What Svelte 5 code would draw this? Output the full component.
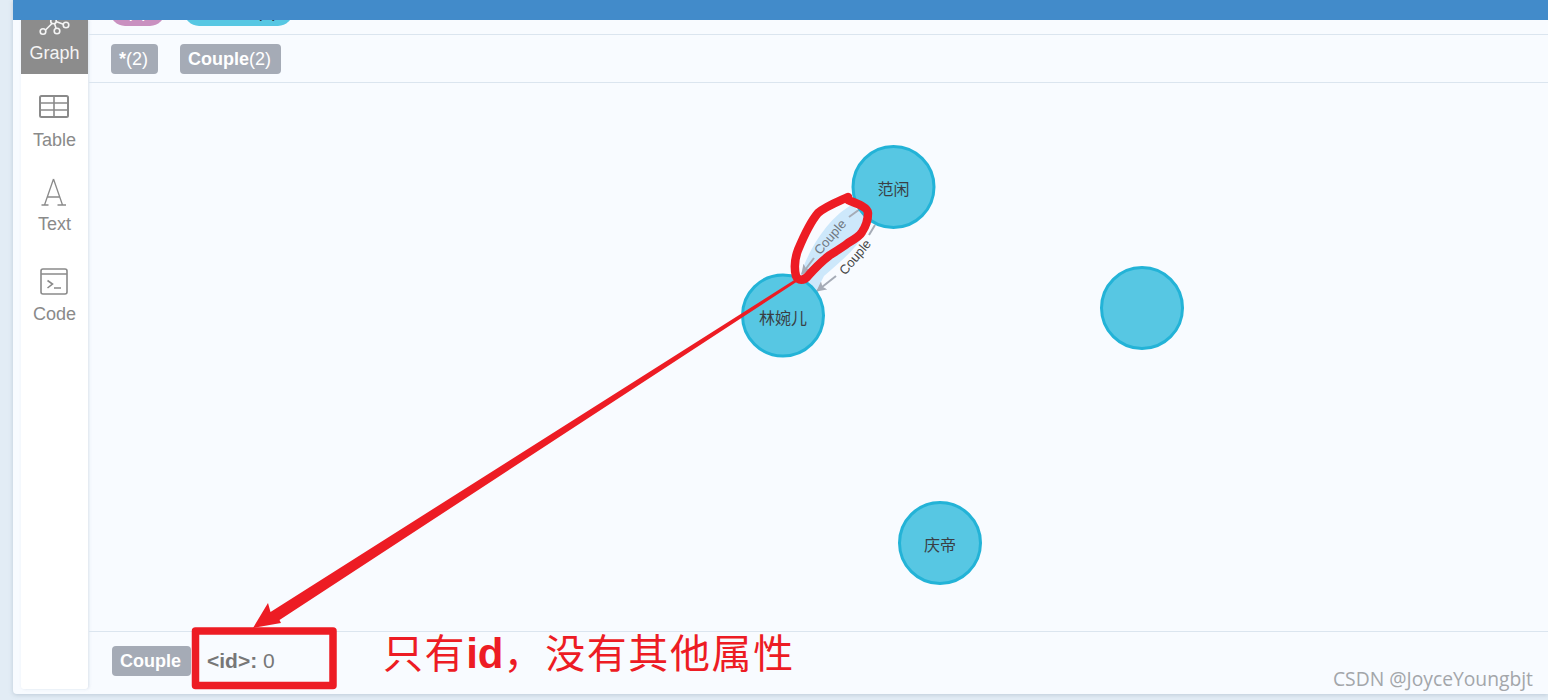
<script>
  const tabs = [
    { name: "Table", cls: "table" },
    { name: "Text", cls: "text" },
    { name: "Code", cls: "code" }
  ];

  const nodes = [
    { x: 893.5, y: 187, label: "范闲" },
    { x: 783, y: 315.5, label: "林婉儿" },
    { x: 1142, y: 308, label: "" },
    { x: 940, y: 543, label: "庆帝" }
  ];

  // red hand-drawn loop around the selected relationship
  const loop = "M848 197 C842 200 826 206 818 213 C812 220 803 238 798 250 C795 258 794 268 796 276 C798 281 804 281 808 276 C815 268 822 261 830 255 C838 250 843 247 848 243 C855 239 860 236 862 232 C866 226 868 220 868 213 C868 207 856 203 848 200";
</script>

<div class="page">
  <div class="frame">
    <div class="topbar"></div>
    <div class="body">
      <nav class="sidebar">
        <div class="tab active">
          <svg class="icon-graph" width="32" height="20" viewBox="0 0 32 20" fill="none" stroke="currentColor" stroke-width="1.6">
            <circle cx="4" cy="14.5" r="2.8" />
            <circle cx="18" cy="14" r="2.8" />
            <circle cx="27" cy="8" r="2.8" />
            <circle cx="14.500" cy="4" r="2.8" />
            <path d="M6.500 13 L13 6.500 M15.500 6.500 L17 11.300 M17 4.500 L24.300 7.300" />
          </svg>
          <span>Graph</span>
        </div>
        {#each tabs as tab}
          <div class="tab {tab.cls}">
            {#if tab.cls === "table"}
              <svg width="30" height="23" viewBox="0 0 30 23" fill="none" stroke="currentColor" stroke-width="2">
                <rect x="1" y="1" width="28" height="21" rx="1.500" />
                <path d="M1 8 H29 M1 15 H29 M15 1 V22" stroke-width="1.600" />
              </svg>
            {:else if tab.cls === "text"}
              <svg width="26" height="28" viewBox="0 0 26 28" fill="none" stroke="currentColor" stroke-width="1.300">
                <path d="M12.500 1 L3.500 27 M12.500 1 L21.500 27 M6.500 19 H18.500 M0.500 27 H7.500 M16.500 27 H25" />
              </svg>
            {:else}
              <svg width="28" height="27" viewBox="0 0 28 27" fill="none" stroke="currentColor" stroke-width="1.600">
                <rect x="1" y="1" width="26" height="25" rx="2" />
                <path d="M1 6 H27 M7.500 12.500 L12.500 16 L7.500 20 M14 20 H21" />
              </svg>
            {/if}
            <span>{tab.name}</span>
          </div>
        {/each}
      </nav>

      <main class="main">
        <div class="legend nodes-row">
          <span class="pill purple">*(4)</span>
          <span class="pill blue">Person(4)</span>
        </div>
        <div class="legend rels-row">
          <span class="badge"><b>*</b>(2)</span>
          <span class="badge"><b>Couple</b>(2)</span>
        </div>

        <svg class="canvas" viewBox="89 83 1459 548">
          <defs>
            <marker id="arrow" markerWidth="10" markerHeight="10" refX="9" refY="5" orient="auto" markerUnits="userSpaceOnUse">
              <path d="M0 0 L10 5 L0 10 L2 5 Z" fill="#a5abb6" />
            </marker>
          </defs>

          <path class="halo" d="M852 205 C835 213 812 240 800 276 L816 292 L824 276 C845 258 866 240 870 220 Z" />

          <path class="edge" d="M860 209 L849 217" />
          <path class="edge" d="M814 258 L802 274" marker-end="url(#arrow)" />
          <path class="edge" d="M875 225 L869 235" />
          <path class="edge" d="M836 276 L817 291" marker-end="url(#arrow)" />
          <text class="edge-label selected" transform="translate(830 237) rotate(-49)">Couple</text>
          <text class="edge-label" transform="translate(855 257) rotate(-50)">Couple</text>

          {#each nodes as node}
            <circle class="node" cx={node.x} cy={node.y} r="40.5" />
            {#if node.label}
              <text class="node-label" x={node.x} y={node.y + 1}>{node.label}</text>
            {/if}
          {/each}
        </svg>

        <footer class="details">
          <span class="badge solid">Couple</span>
          <span class="prop"><b>&lt;id&gt;:</b> 0</span>
        </footer>
      </main>
    </div>
  </div>

  <!-- annotation layer drawn on top of the screenshot -->
  <svg class="marks" viewBox="0 0 1548 700">
    <path d={loop} class="loop" />
    <polygon class="ink" points="799,277 801,279 279.500,620 281,623 253,628 268,603 270.500,612" />
    <rect class="box" x="195.500" y="631" width="137.500" height="54.500" />
  </svg>
  <div class="note">只有<b>id</b>，没有其他属性</div>
  <div class="watermark">CSDN @JoyceYoungbjt</div>
</div>

<style>
  :global(body) {
    margin: 0;
    background: #e2ecf5;
  }

  .page {
    position: relative;
    width: 1548px;
    height: 700px;
    overflow: hidden;
    background: #e2ecf5;
    font-family: "Liberation Sans", Arial, sans-serif;
  }

  .frame {
    display: flex;
    flex-direction: column;
    height: 694px;
    margin-left: 13px;
    background: #f8fbff;
    border-bottom-left-radius: 4px;
    box-shadow: 0 1px 4px rgba(120, 140, 160, 0.35);
  }

  .topbar {
    flex: none;
    height: 20px;
    background: #428bca;
    position: relative;
    z-index: 2;
  }

  .body {
    flex: 1;
    display: flex;
    min-height: 0;
  }

  .sidebar {
    flex: none;
    width: 67px;
    height: 669px;
    margin-left: 8px;
    background: #fff;
    border-bottom-left-radius: 3px;
    border-bottom-right-radius: 3px;
    box-shadow: 1px 0 3px rgba(150, 170, 190, 0.3);
    color: #8a8a8a;
    font-size: 18px;
    line-height: 22px;
  }

  .tab {
    display: flex;
    flex-direction: column;
    align-items: center;
  }

  .tab.active {
    height: 54px;
    background: #8c8c8c;
    color: #f4f4f4;
    justify-content: flex-end;
    padding-bottom: 10px;
    box-sizing: border-box;
  }

  .icon-graph {
    flex: none;
    margin-bottom: 5px;
  }

  .table {
    margin-top: 21px;
  }

  .table svg {
    margin: 0 1px 11px 0;
  }

  .text {
    margin-top: 27px;
  }

  .text svg {
    margin: 0 1px 7px 0;
  }

  .code {
    margin-top: 33px;
  }

  .code svg {
    margin: 0 1px 8px 0;
  }

  .main {
    flex: 1;
    min-width: 0;
    display: flex;
    flex-direction: column;
    margin-left: 1px;
  }

  .legend {
    flex: none;
    display: flex;
    border-bottom: 1px solid #dbe5ef;
  }

  .nodes-row {
    height: 14px;
    overflow: hidden;
    padding-left: 21px;
    gap: 19px;
    align-items: flex-end;
  }

  .pill {
    flex: none;
    height: 30px;
    margin-bottom: 8px;
    border-radius: 15px;
    font-size: 18px;
    line-height: 30px;
    box-sizing: border-box;
  }

  .pill.purple {
    width: 55px;
    padding-left: 9px;
    background: #c990c0;
    color: #fff;
  }

  .pill.blue {
    width: 109px;
    padding-left: 15px;
    background: #57c7e3;
    color: #2a2c34;
  }

  .rels-row {
    height: 38px;
    padding: 9px 0 0 22px;
    gap: 22px;
  }

  .badge {
    height: 30px;
    padding: 0 10px 0 8px;
    border-radius: 4px;
    background: #a5abb6;
    color: #fff;
    font-size: 18px;
    line-height: 30px;
    white-space: nowrap;
  }

  .canvas {
    flex: none;
    display: block;
    width: 1459px;
    height: 548px;
  }

  .halo {
    fill: #cde8fb;
  }

  .edge {
    fill: none;
    stroke: #a5abb6;
    stroke-width: 2;
  }

  .edge-label {
    font-size: 13px;
    text-anchor: middle;
    dominant-baseline: central;
    fill: #444;
  }

  .edge-label.selected {
    fill: #6f7780;
  }

  .node {
    fill: #57c7e3;
    stroke: #23b3d7;
    stroke-width: 3;
  }

  .node-label {
    font-family: "Noto Sans CJK SC", sans-serif;
    font-size: 16px;
    text-anchor: middle;
    dominant-baseline: central;
    fill: #3a3f45;
  }

  .details {
    flex: 1;
    display: flex;
    align-items: flex-start;
    border-top: 1px solid #dbe5ef;
    padding: 14px 0 0 23px;
    font-size: 18px;
  }

  .badge.solid {
    padding: 0 10px 0 8px;
    font-weight: bold;
  }

  .prop {
    margin-left: 16px;
    line-height: 30px;
    color: #777;
    font-size: 21px;
  }

  .marks {
    position: absolute;
    inset: 0;
    width: 1548px;
    height: 700px;
    z-index: 3;
    pointer-events: none;
  }

  .loop {
    fill: none;
    stroke: #ed1c24;
    stroke-width: 8.500;
    stroke-linecap: round;
    stroke-linejoin: round;
  }

  .ink {
    fill: #ed1c24;
  }

  .box {
    fill: none;
    stroke: #ed1c24;
    stroke-width: 7.500;
    stroke-linejoin: round;
  }

  .note {
    position: absolute;
    left: 383px;
    top: 625px;
    z-index: 3;
    font-family: "Noto Sans CJK SC", sans-serif;
    font-size: 40px;
    line-height: 52px;
    letter-spacing: 1.600px;
    color: #ed1c24;
    white-space: nowrap;
  }

  .note b {
    font-family: "Liberation Sans", sans-serif;
    font-size: 42px;
    letter-spacing: 0;
  }

  .watermark {
    position: absolute;
    right: 15px;
    top: 665px;
    z-index: 3;
    font-family: "Open Sans", sans-serif;
    font-size: 19.300px;
    line-height: 28px;
    color: #a3a6aa;
    white-space: nowrap;
  }
</style>
